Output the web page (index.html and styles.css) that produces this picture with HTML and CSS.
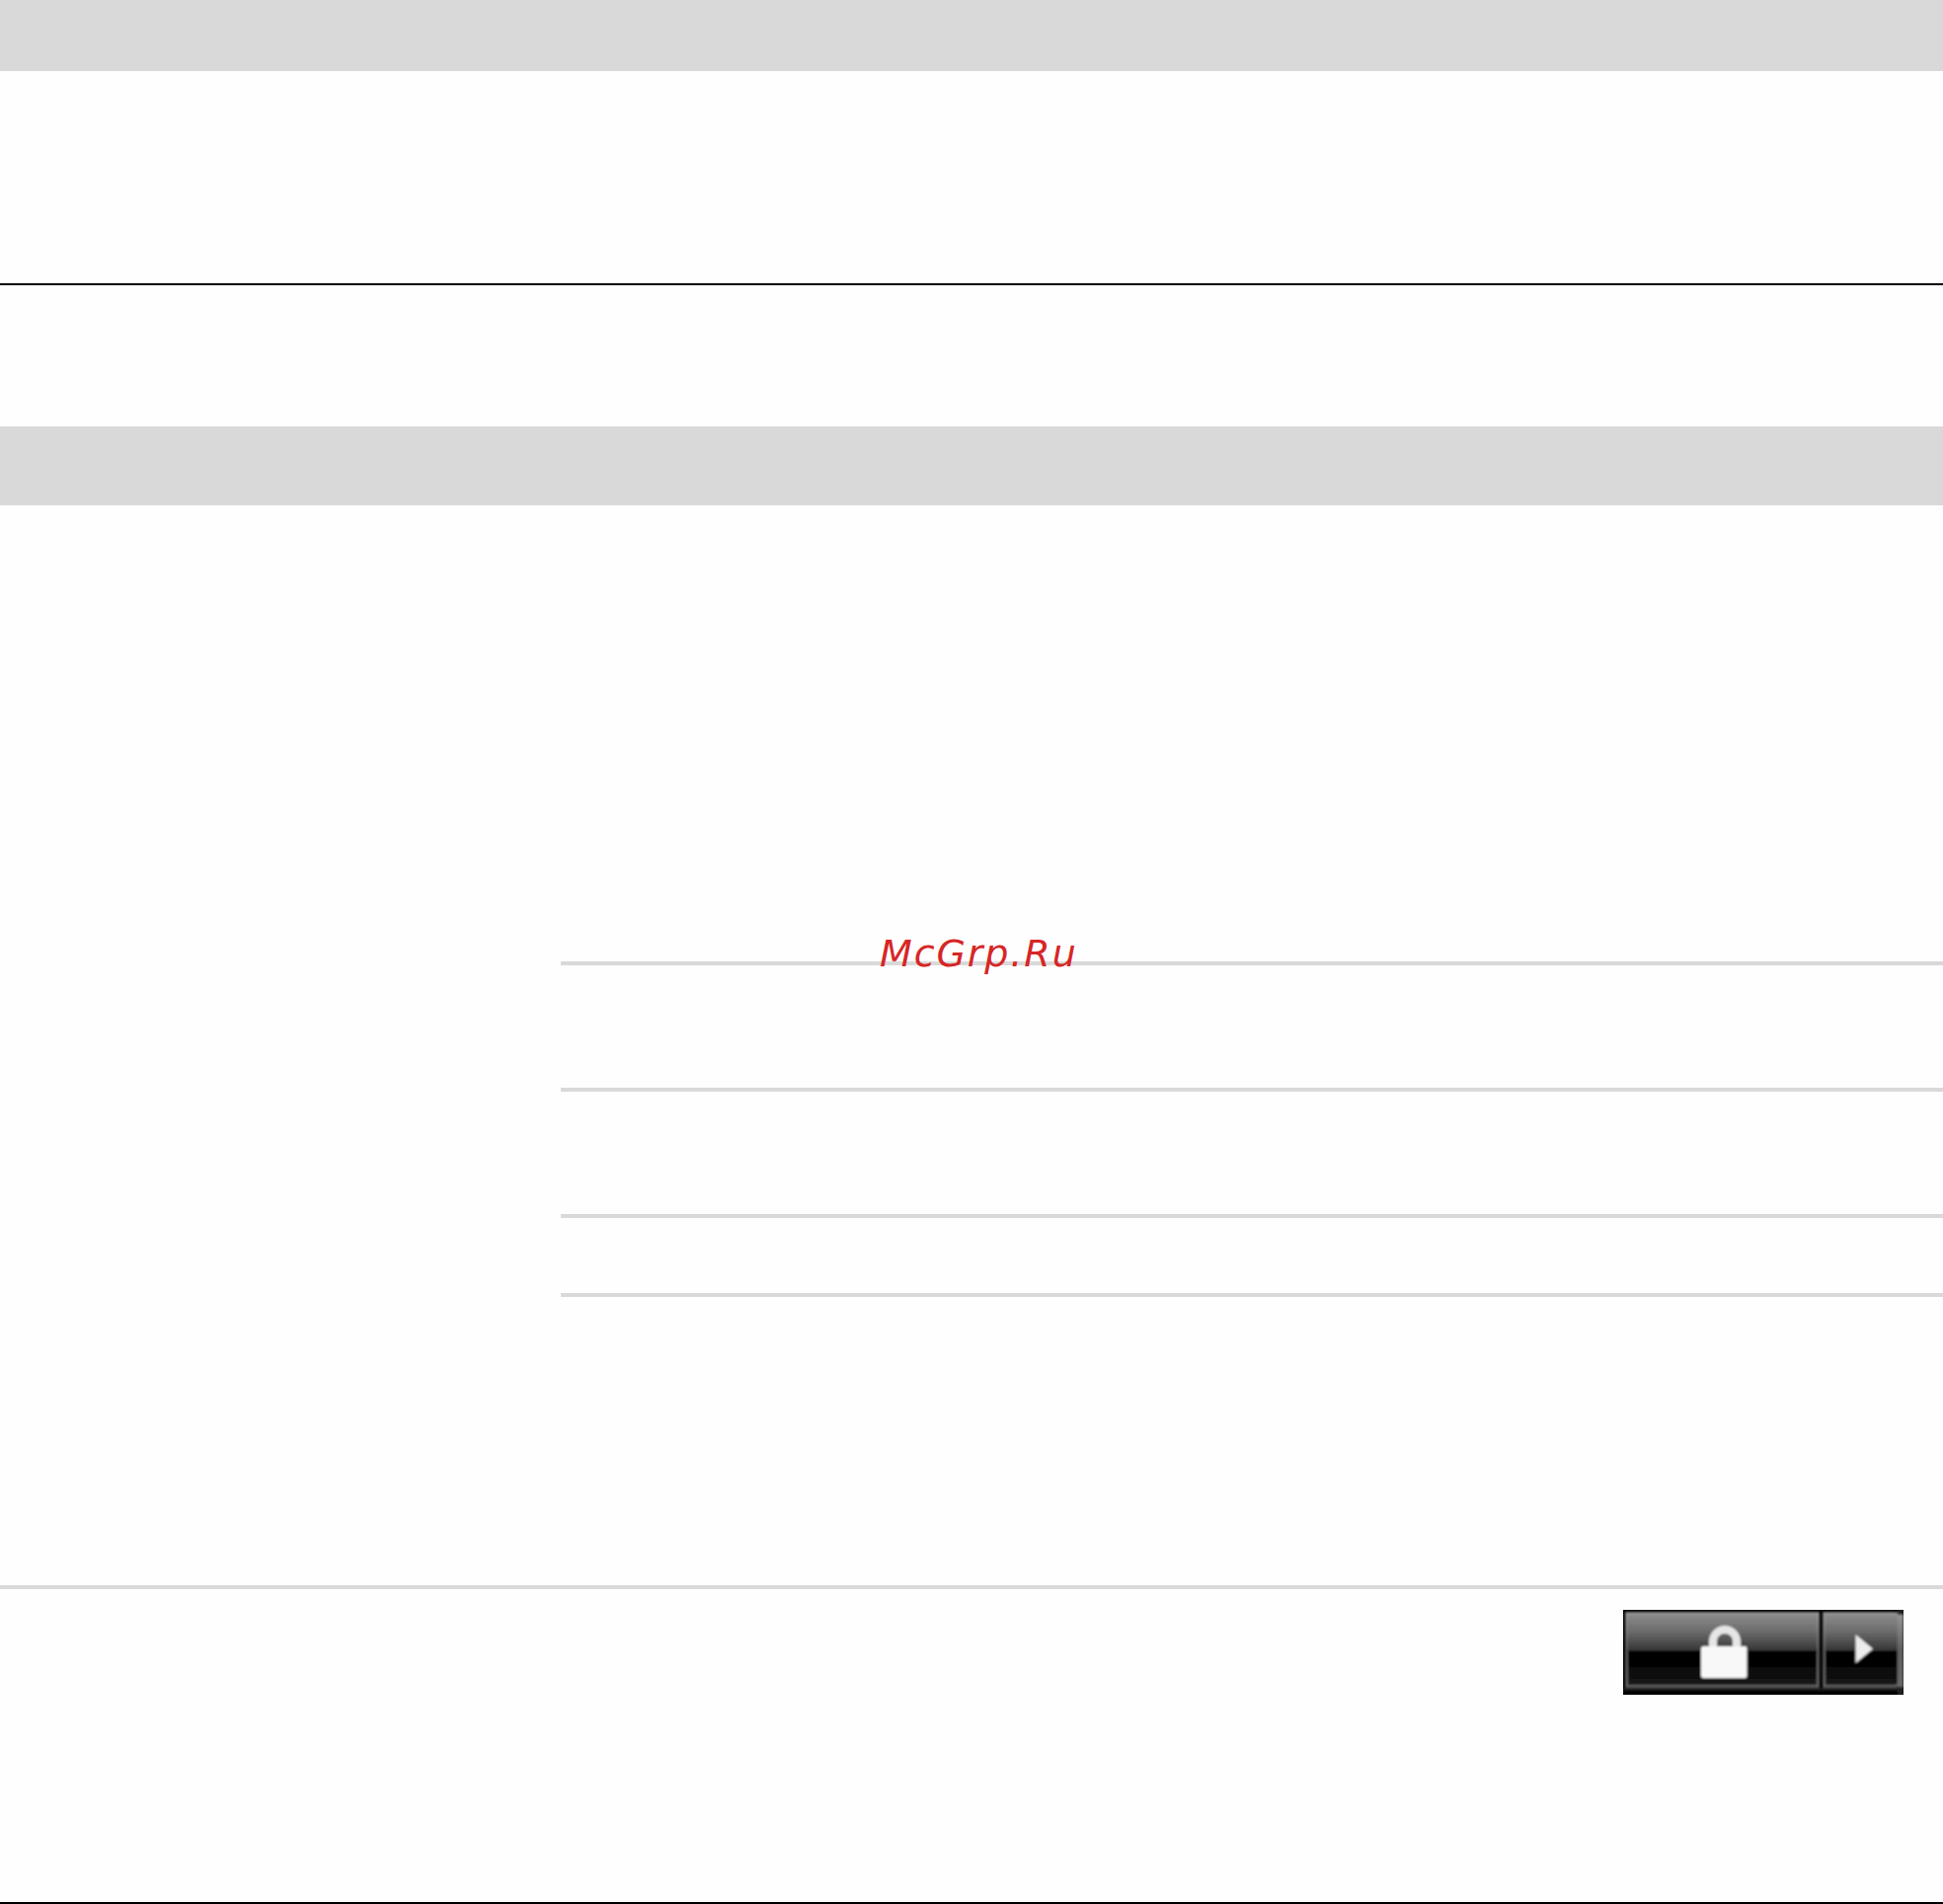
FILE: index.html
```html
<!DOCTYPE html>
<html lang="ru">
<head>
<meta charset="utf-8">
<title>McGrp.Ru</title>
<link rel="stylesheet" href="styles.css">
</head>
<body>
<div class="page">
  <header class="band band-top"></header>
  <section class="intro"></section>
  <section class="band band-second"></section>
  <section class="content">
    <a class="watermark">McGrp.Ru</a>
    <div class="rows">
      <div class="row row-tall"></div>
      <div class="row row-tall"></div>
      <div class="row row-short"></div>
      <div class="row row-end"></div>
    </div>
  </section>
  <footer class="footer">
    <svg class="lock-button" viewBox="0 0 284 86" width="284" height="86" role="img" aria-label="Lock">
      <defs>
        <linearGradient id="btn" gradientUnits="userSpaceOnUse" x1="0" y1="3" x2="0" y2="78">
          <stop offset="0" stop-color="#8e8e8e"/>
          <stop offset="0.25" stop-color="#6c6c6c"/>
          <stop offset="0.5" stop-color="#383838"/>
          <stop offset="0.52" stop-color="#000"/>
          <stop offset="0.7" stop-color="#050505"/>
          <stop offset="1" stop-color="#181818"/>
        </linearGradient>
        <linearGradient id="edge" gradientUnits="userSpaceOnUse" x1="0" y1="3" x2="0" y2="78">
          <stop offset="0" stop-color="#989898"/>
          <stop offset="0.5" stop-color="#606060"/>
          <stop offset="1" stop-color="#686868"/>
        </linearGradient>
        <filter id="soft" x="-10%" y="-10%" width="120%" height="120%"><feGaussianBlur stdDeviation="1.2"/></filter>
      </defs>
      <rect width="284" height="86" fill="#000"/>
      <g filter="url(#soft)">
        <rect x="0" y="79.500" width="284" height="2.500" fill="#222"/>
        <rect x="279" y="4" width="5" height="76" fill="url(#edge)"/>
        <rect x="3.500" y="3.500" width="194" height="74" fill="url(#btn)" stroke="url(#edge)" stroke-width="2.500"/>
        <path d="M203.500 3.500H275Q279 3.500 279 8V73Q279 77.500 275 77.500H203.500Z" fill="url(#btn)" stroke="url(#edge)" stroke-width="2.500"/>
        <path d="M91 40V32A12 12 0 0 1 115 32V40" fill="none" stroke="#e6e6e6" stroke-width="8"/>
        <rect x="79" y="37" width="46.500" height="32" rx="2" fill="#f8f8f8"/>
        <path d="M235.500 25L253 39.500L235.500 54Z" fill="#ececec"/>
        <rect x="278" y="0" width="6" height="5" fill="#222"/>
        <rect x="278" y="78" width="6" height="8" fill="#222"/>
      </g>
    </svg>
  </footer>
</div>
</body>
</html>
```
FILE: styles.css
```css
* { box-sizing: border-box; }
html, body { margin: 0; padding: 0; background: #fefefe; }
.page { display: flex; flex-direction: column; height: 1929px; border-bottom: 2px solid #000; }
.band { background: #d9d9d9; flex: none; }
.band-top { height: 72px; }
.intro { height: 217px; border-bottom: 2px solid #000; flex: none; }
.band-second { height: 80px; margin-top: 143px; }
.content { position: relative; flex: none; padding: 462px 0 292px 568px; }
.rows { display: flex; flex-direction: column; }
.row { border-top: 4px solid #d9d9d9; }
.row-tall { height: 128px; }
.row-short { height: 80px; }
.row-end { height: 4px; }
.watermark {
  position: absolute;
  left: 891px;
  top: 432px;
  font: italic 38px/44px "DejaVu Sans", sans-serif;
  letter-spacing: 1.9px;
  color: #d62626;
  white-space: nowrap;
}
.footer {
  flex: 1;
  display: flex;
  justify-content: flex-end;
  align-items: flex-start;
  padding: 21px 40px 0 0;
  border-top: 4px solid #d9d9d9;
}
.lock-button { display: block; }
```
